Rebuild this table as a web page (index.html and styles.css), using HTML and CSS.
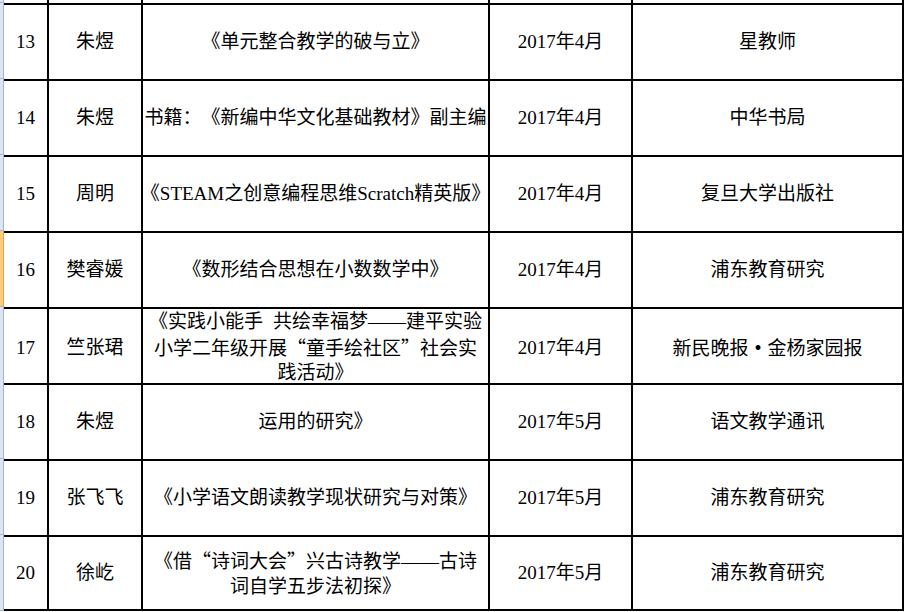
FILE: index.html
```html
<!DOCTYPE html>
<html lang="zh-CN">
<head>
<meta charset="utf-8">
<title>成果列表</title>
<link rel="stylesheet" href="styles.css">
</head>
<body>
<div class="sheet">
  <div class="row stub">
    <div class="rh"></div><div class="c n"></div><div class="c"></div><div class="c"></div><div class="c"></div><div class="c last"></div>
  </div>
  <div class="row">
    <div class="rh"></div>
    <div class="c n">13</div>
    <div class="c">朱煜</div>
    <div class="c">《单元整合教学的破与立》</div>
    <div class="c">2017年4月</div>
    <div class="c last">星教师</div>
  </div>
  <div class="row">
    <div class="rh"></div>
    <div class="c n">14</div>
    <div class="c">朱煜</div>
    <div class="c">书籍：《新编中华文化基础教材》副主编</div>
    <div class="c">2017年4月</div>
    <div class="c last">中华书局</div>
  </div>
  <div class="row">
    <div class="rh"></div>
    <div class="c n">15</div>
    <div class="c">周明</div>
    <div class="c">《STEAM之创意编程思维Scratch精英版》</div>
    <div class="c">2017年4月</div>
    <div class="c last">复旦大学出版社</div>
  </div>
  <div class="row">
    <div class="rh active"></div>
    <div class="c n">16</div>
    <div class="c">樊睿媛</div>
    <div class="c">《数形结合思想在小数数学中》</div>
    <div class="c">2017年4月</div>
    <div class="c last">浦东教育研究</div>
  </div>
  <div class="row">
    <div class="rh"></div>
    <div class="c n">17</div>
    <div class="c">竺张珺</div>
    <div class="c"><div class="t">《实践小能手<span class="sp"></span>共绘幸福梦——建平实验<br>小学二年级开展<span class="q">“</span>童手绘社区<span class="q">”</span>社会实<br>践活动》</div></div>
    <div class="c">2017年4月</div>
    <div class="c last"><div class="t">新民晚报<span class="dot">·</span>金杨家园报</div></div>
  </div>
  <div class="row">
    <div class="rh"></div>
    <div class="c n">18</div>
    <div class="c">朱煜</div>
    <div class="c">运用的研究》</div>
    <div class="c">2017年5月</div>
    <div class="c last">语文教学通讯</div>
  </div>
  <div class="row">
    <div class="rh"></div>
    <div class="c n">19</div>
    <div class="c">张飞飞</div>
    <div class="c">《小学语文朗读教学现状研究与对策》</div>
    <div class="c">2017年5月</div>
    <div class="c last">浦东教育研究</div>
  </div>
  <div class="row final">
    <div class="rh"></div>
    <div class="c n">20</div>
    <div class="c">徐屹</div>
    <div class="c"><div class="t">《借<span class="q">“</span>诗词大会<span class="q">”</span>兴古诗教学——古诗<br>词自学五步法初探》</div></div>
    <div class="c">2017年5月</div>
    <div class="c last">浦东教育研究</div>
  </div>
</div>
</body>
</html>
```

FILE: styles.css
```css
html, body {
  margin: 0;
  padding: 0;
  background: #ffffff;
  overflow: hidden;
}

.sheet {
  width: 905px;
  font-family: "Liberation Serif", "Noto Sans CJK SC", serif;
  font-size: 19px;
  color: #000;
  text-spacing-trim: space-all;
}

.row {
  display: grid;
  grid-template-columns: 4px 43px 94px 347px 143px 273px;
  height: 76px;
}

.row.stub {
  height: 3px;
}

.rh {
  background: #dce5f0;
  border-right: 1px solid #a3b6cd;
  border-bottom: 1px solid #a3b6cd;
  box-sizing: border-box;
}

.rh.active {
  background: #fbca7f;
  border-right-color: #e0a550;
}

.c {
  box-sizing: border-box;
  border-top: 2px solid #000;
  border-left: 2px solid #000;
  display: flex;
  align-items: center;
  justify-content: center;
  text-align: center;
  white-space: nowrap;
  line-height: 24.5px;
  padding-top: 1px;
}

.t {
  text-align: center;
}

.sp {
  display: inline-block;
  width: 10px;
}

.c.n {
  border-left: none;
}

.c.last {
  border-right: 2px solid #000;
}

.stub .c {
  border-top: none;
}

.final .c {
  border-bottom: 2px solid #000;
}

.q {
  font-family: "Noto Sans CJK SC", sans-serif;
}

.dot {
  display: inline-block;
  width: 1em;
  text-align: center;
  font-family: "Noto Sans CJK SC", sans-serif;
  font-weight: 700;
}
```
